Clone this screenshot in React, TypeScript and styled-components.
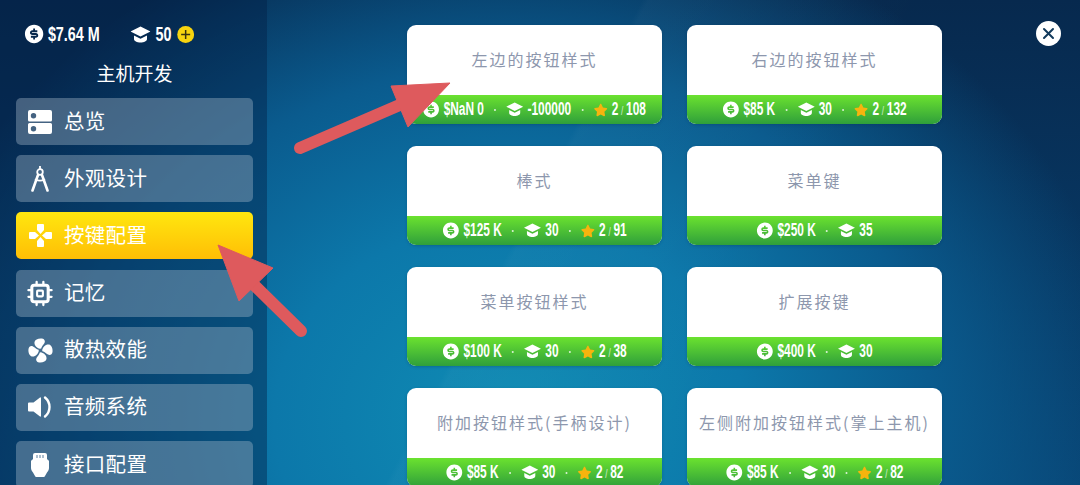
import React from 'react';
import styled, { createGlobalStyle } from 'styled-components';
import { FaStar } from 'react-icons/fa';
import { RiMoneyDollarCircleFill } from 'react-icons/ri';

const GlobalStyle = createGlobalStyle`
  html, body {
    margin: 0;
    padding: 0;
    width: 1080px;
    height: 485px;
    overflow: hidden;
    background: #06294d;
  }
`;

const CJK = `"Noto Sans CJK SC", "Noto Sans", sans-serif`;
const NUM = `"Liberation Sans", Arial, sans-serif`;

const Screen = styled.div`
  position: relative;
  display: flex;
  width: 1080px;
  height: 485px;
  overflow: hidden;
  font-family: ${CJK};
  background:
    linear-gradient(118deg, rgba(255, 255, 255, 0) 48%, rgba(255, 255, 255, 0.025) 48.5%, rgba(255, 255, 255, 0) 70%),
    radial-gradient(ellipse 620px 520px at 510px 420px, #0f8cb4 0%, #0c78aa 38%, #0a5b8e 68%, rgba(8, 66, 110, 0) 100%),
    linear-gradient(180deg, #07294e 0%, #084373 100%);
`;

const Sidebar = styled.aside`
  flex: none;
  width: 267px;
  height: 485px;
  box-sizing: border-box;
  padding: 0 14px 0 16px;
  background: rgba(2, 30, 68, 0.42);
`;

// the game font is a condensed one, so the row is squeezed and its icons are stretched back
const Stats = styled.div`
  display: flex;
  align-items: center;
  width: 250px;
  height: 22px;
  margin: 23px 0 0 9px;
  color: #fff;
  transform: scaleX(0.7);
  transform-origin: left center;
`;

const StatText = styled.span`
  font-family: ${NUM};
  font-weight: 700;
  font-size: 20.5px;
  margin-left: 7px;
  white-space: nowrap;
`;

const StatIcon = styled.span<{ $width: number }>`
  flex: none;
  display: flex;
  align-items: center;
  justify-content: center;
  width: ${(p) => p.$width / 0.7}px;
  svg {
    flex: none;
    transform: scaleX(1.4286);
  }
`;

const CoinGroup = styled.div`
  display: flex;
  align-items: center;
  width: 151px;
`;

const PlusBadge = styled(StatIcon)`
  height: 17px;
  margin-left: 8px;
`;

const Title = styled.h1`
  margin: 13px 0 10px;
  height: 30px;
  text-align: center;
  font-size: 19px;
  line-height: 30px;
  font-weight: 400;
  color: #fff;
`;

const Menu = styled.nav`
  display: flex;
  flex-direction: column;
  gap: 10.2px;
`;

const MenuItem = styled.div<{ $active?: boolean }>`
  display: flex;
  align-items: center;
  flex: none;
  height: 47px;
  border-radius: 5px;
  color: #fff;
  background: ${(p) =>
    p.$active ? 'linear-gradient(180deg, #ffe70f 0%, #ffbe05 100%)' : 'rgba(170, 190, 205, 0.38)'};
`;

const MenuLabel = styled.span`
  padding-bottom: 4px;
  font-size: 20.5px;
  letter-spacing: 0.3px;
`;

const MenuIcon = styled.span`
  display: flex;
  align-items: center;
  justify-content: center;
  width: 26px;
  height: 28px;
  margin: 0 11px 0 11px;
`;

const Content = styled.main`
  flex: none;
  display: grid;
  grid-template-columns: 255px 255px;
  grid-auto-rows: 99px;
  column-gap: 25px;
  row-gap: 22px;
  padding: 25px 0 0 140px;
`;

const Card = styled.div`
  display: flex;
  flex-direction: column;
  border-radius: 9px;
  overflow: hidden;
  background: #fff;
  box-shadow: 0 1px 3px rgba(3, 40, 80, 0.25);
`;

const CardName = styled.div`
  flex: 1;
  display: flex;
  align-items: center;
  justify-content: center;
  padding-bottom: 3px;
  font-size: 16px;
  letter-spacing: 2px;
  white-space: nowrap;
  color: #8d97ad;
`;

const CardBar = styled.div`
  flex: none;
  display: flex;
  align-items: center;
  justify-content: center;
  height: 29px;
  color: #fff;
  background: linear-gradient(180deg, #6be22f 0%, #2f9f3b 100%);
`;

const BarRow = styled.div`
  flex: none;
  display: flex;
  align-items: center;
  transform: scaleX(0.68);
`;

const BarIcon = styled.span<{ $width: number }>`
  flex: none;
  display: flex;
  align-items: center;
  justify-content: center;
  width: ${(p) => p.$width / 0.68}px;
  svg {
    flex: none;
    transform: scaleX(1.47);
  }
`;

const BarText = styled.span`
  font-family: ${NUM};
  font-weight: 700;
  font-size: 17.5px;
  margin-left: 6px;
  white-space: nowrap;
`;

const Slash = styled.span`
  font-weight: 400;
  font-size: 12px;
  opacity: 0.75;
  margin: 0 4px;
`;

const Dot = styled.span`
  flex: none;
  width: 3px;
  height: 2px;
  margin: 0 15px;
  border-radius: 50%;
  background: rgba(255, 255, 255, 0.8);
`;

const CloseButton = styled.button`
  position: absolute;
  top: 21px;
  left: 1036px;
  display: flex;
  align-items: center;
  justify-content: center;
  width: 25px;
  height: 25px;
  padding: 0;
  border: 0;
  border-radius: 50%;
  background: #fff;
`;

const ArrowLayer = styled.svg`
  position: absolute;
  inset: 0;
  pointer-events: none;
`;

const CapIcon = ({ size }: { size: number }) => (
  <svg width={size} height={size * 0.85} viewBox="0 0 20 17" fill="#fff">
    <path d="M10 0.500L20 5.500 10 10.500 0 5.500z" />
    <path d="M3.500 9.500L10 12.800l6.500-3.300v3.500c0 2-3 3.500-6.500 3.500S3.500 15 3.500 13z" />
  </svg>
);

const OverviewIcon = () => (
  <svg width="24" height="24" viewBox="0 0 24 24">
    <path
      fill="#fff"
      fillRule="evenodd"
      d="M2 0h20a2 2 0 0 1 2 2v8a1.500 1.500 0 0 1-1.500 1.500h-21A1.500 1.500 0 0 1 0 10V2a2 2 0 0 1 2-2zm3.500 3a2.700 2.700 0 1 0 0 5.400 2.700 2.700 0 0 0 0-5.400zM1.500 13h21a1.500 1.500 0 0 1 1.500 1.500V22a2 2 0 0 1-2 2H2a2 2 0 0 1-2-2v-7.500A1.500 1.500 0 0 1 1.500 13zm4 3a2.700 2.700 0 1 0 0 5.400 2.700 2.700 0 0 0 0-5.400z"
    />
  </svg>
);

const CompassIcon = () => (
  <svg width="18" height="26" viewBox="0 0 18 26" fill="none" stroke="#fff" strokeLinecap="round">
    <path strokeWidth="1.800" d="M9 0.500v2" />
    <circle cx="9" cy="6" r="2.800" strokeWidth="1.800" />
    <path strokeWidth="2.600" d="M7 9L1.500 24.500M11 9l5.500 15.500" />
    <path strokeWidth="1.600" d="M4.500 13.500c3 1.500 6 1.500 9 0" />
  </svg>
);

const PadIcon = () => (
  <svg width="25" height="25" viewBox="0 0 25 25" fill="#fff">
    <path d="M10 1h5a1 1 0 0 1 1 1v5l-3.500 4L9 7V2a1 1 0 0 1 1-1z" />
    <path d="M10 24h5a1 1 0 0 0 1-1v-5l-3.500-4L9 18v5a1 1 0 0 0 1 1z" />
    <path d="M1 10v5a1 1 0 0 0 1 1h5l4-3.500L7 9H2a1 1 0 0 0-1 1z" />
    <path d="M24 10v5a1 1 0 0 1-1 1h-5l-4-3.500L18 9h5a1 1 0 0 1 1 1z" />
  </svg>
);

const ChipIcon = () => (
  <svg width="27" height="27" viewBox="0 0 27 27" fill="none" stroke="#fff">
    <rect x="5" y="5" width="17" height="17" rx="2.500" strokeWidth="3.200" />
    <rect x="10.500" y="10.500" width="6" height="6" rx="0.800" strokeWidth="2.200" />
    <path
      strokeWidth="2.400"
      strokeLinecap="round"
      d="M10 1.500v2.500M17 1.500v2.500M10 23v2.500M17 23v2.500M1.500 10h2.500M1.500 17h2.500M23 10h2.500M23 17h2.500"
    />
  </svg>
);

const FanIcon = () => (
  <svg width="25" height="25" viewBox="0 0 25 25" fill="#fff">
    {[0, 90, 180, 270].map((angle) => (
      <path
        key={angle}
        transform={`rotate(${angle} 12.500 12.500)`}
        d="M12 10.800C9 10 6 7.500 6.500 4 7 1.500 10.500 0 14 0.500c2.500.4 3.500 2.500 2.500 4.500-1 1.800-2.800 3.300-3.300 5.600z"
      />
    ))}
  </svg>
);

const SpeakerIcon = () => (
  <svg width="26" height="26" viewBox="0 0 26 26" fill="none">
    <path fill="#fff" d="M1 9.500a1 1 0 0 1 1-1h4.500L13 3.500a.6.6 0 0 1 1 .5v18a.6.6 0 0 1-1 .5L6.500 17.500H2a1 1 0 0 1-1-1z" />
    <path stroke="#fff" strokeWidth="2.400" strokeLinecap="round" d="M18 3.500c6 5 6 14 0 19" />
  </svg>
);

const PortIcon = () => (
  <svg width="18" height="24" viewBox="0 0 18 24">
    <path
      fill="#fff"
      d="M4 0h10a2 2 0 0 1 2 2v4l1 1a1.500 1.500 0 0 1 1 1.500V15c0 2-1 3-2 4.500L14 23a1.500 1.500 0 0 1-1.500 1h-7A1.500 1.500 0 0 1 4 23l-2-3.500C1 18 0 17 0 15V8.500A1.500 1.500 0 0 1 1 7l1-1V2a2 2 0 0 1 2-2z"
    />
    <path stroke="#5a7f9f" strokeWidth="1" d="M6 2v3M9 2v3M12 2v3" />
  </svg>
);

interface CardInfo {
  name: string;
  money: string;
  points: string;
  stars?: string;
}

const cards: CardInfo[] = [
  { name: '左边的按钮样式', money: '$NaN 0', points: '-100000', stars: '108' },
  { name: '右边的按钮样式', money: '$85 K', points: '30', stars: '132' },
  { name: '棒式', money: '$125 K', points: '30', stars: '91' },
  { name: '菜单键', money: '$250 K', points: '35' },
  { name: '菜单按钮样式', money: '$100 K', points: '30', stars: '38' },
  { name: '扩展按键', money: '$400 K', points: '30' },
  { name: '附加按钮样式(手柄设计)', money: '$85 K', points: '30', stars: '82' },
  { name: '左侧附加按钮样式(掌上主机)', money: '$85 K', points: '30', stars: '82' },
];

const menu = [
  { label: '总览', icon: <OverviewIcon /> },
  { label: '外观设计', icon: <CompassIcon /> },
  { label: '按键配置', icon: <PadIcon />, active: true },
  { label: '记忆', icon: <ChipIcon /> },
  { label: '散热效能', icon: <FanIcon /> },
  { label: '音频系统', icon: <SpeakerIcon /> },
  { label: '接口配置', icon: <PortIcon /> },
];

export default function App() {
  return (
    <Screen>
      <GlobalStyle />
      <Sidebar>
        <Stats>
          <CoinGroup>
            <StatIcon $width={18}>
              <RiMoneyDollarCircleFill size={22} color="#fff" />
            </StatIcon>
            <StatText>$7.64 M</StatText>
          </CoinGroup>
          <StatIcon $width={20}>
            <CapIcon size={20} />
          </StatIcon>
          <StatText>50</StatText>
          <PlusBadge $width={17}>
            <svg width="17" height="17" viewBox="0 0 17 17">
              <circle cx="8.500" cy="8.500" r="8.500" fill="#f8d40f" />
              <path stroke="#3a3410" strokeWidth="1.500" d="M8.500 4v9M4 8.500h9" />
            </svg>
          </PlusBadge>
        </Stats>
        <Title>主机开发</Title>
        <Menu>
          {menu.map((item) => (
            <MenuItem key={item.label} $active={item.active}>
              <MenuIcon>{item.icon}</MenuIcon>
              <MenuLabel>{item.label}</MenuLabel>
            </MenuItem>
          ))}
        </Menu>
      </Sidebar>
      <Content>
        {cards.map((card) => (
          <Card key={card.name}>
            <CardName>{card.name}</CardName>
            <CardBar>
              <BarRow>
                <BarIcon $width={17}>
                  <RiMoneyDollarCircleFill size={19} color="#fff" />
                </BarIcon>
                <BarText>{card.money}</BarText>
                <Dot />
                <BarIcon $width={17}>
                  <CapIcon size={17} />
                </BarIcon>
                <BarText>{card.points}</BarText>
                {card.stars && (
                  <>
                    <Dot />
                    <BarIcon $width={14}>
                      <FaStar size={14} color="#f6b40e" />
                    </BarIcon>
                    <BarText>
                      2<Slash>/</Slash>
                      {card.stars}
                    </BarText>
                  </>
                )}
              </BarRow>
            </CardBar>
          </Card>
        ))}
      </Content>
      <CloseButton aria-label="close">
        <svg width="13" height="13" viewBox="0 0 13 13">
          <path stroke="#123a5c" strokeWidth="2" strokeLinecap="round" d="M2 2l9 9M11 2l-9 9" />
        </svg>
      </CloseButton>
      <ArrowLayer width="1080" height="485" viewBox="0 0 1080 485">
        <g fill="#de5a5d" stroke="#de5a5d" strokeLinejoin="round">
          <path d="M300 148L402 104" strokeWidth="12" strokeLinecap="round" />
          <path d="M450 83L391 86L408 127Z" strokeWidth="1" />
          <path d="M301 331L250 281" strokeWidth="12" strokeLinecap="round" />
          <path d="M218 245L273 268L239 301Z" strokeWidth="1" />
        </g>
      </ArrowLayer>
    </Screen>
  );
}
